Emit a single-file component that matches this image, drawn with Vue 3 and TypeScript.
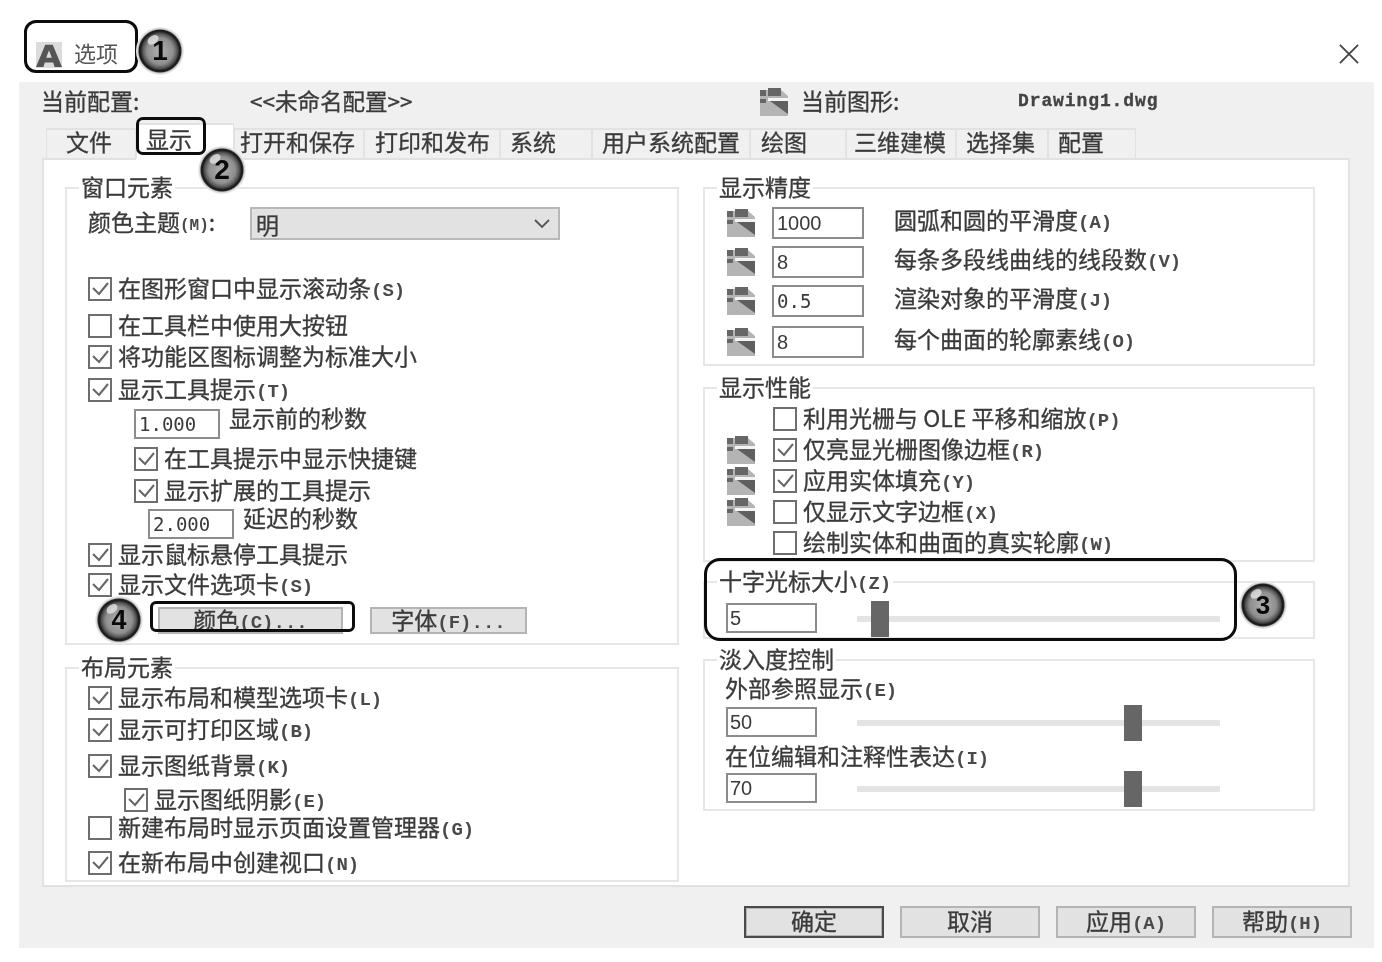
<script setup lang="ts">
interface Row { y: number; x: number; kind: string; text?: string; key?: string; checked?: boolean; value?: string; icon?: boolean; thumb?: number }

function place(list: Row[], top: number) {
  let prev = top
  return list.map((r) => {
    const style = { marginTop: `${r.y - 15 - prev}px`, marginLeft: `${r.x}px` }
    prev = r.y + 15
    return { ...r, style, mono: (r.value ?? '').includes('.') }
  })
}

const tabs = [
  { label: '文件', w: 90, pad: 19 },
  { label: '显示', w: 98, pad: 9, active: true },
  { label: '打开和保存', w: 130, pad: 5 },
  { label: '打印和发布', w: 136, pad: 10 },
  { label: '系统', w: 92, pad: 9 },
  { label: '用户系统配置', w: 158, pad: 9 },
  { label: '绘图', w: 96, pad: 10 },
  { label: '三维建模', w: 110, pad: 7 },
  { label: '选择集', w: 92, pad: 9 },
  { label: '配置', w: 88, pad: 9 },
]

const windowRows = place([
  { kind: 'check', x: 21, y: 289, checked: true, text: '在图形窗口中显示滚动条', key: '(S)' },
  { kind: 'check', x: 21, y: 326, checked: false, text: '在工具栏中使用大按钮' },
  { kind: 'check', x: 21, y: 357, checked: true, text: '将功能区图标调整为标准大小' },
  { kind: 'check', x: 21, y: 390, checked: true, text: '显示工具提示', key: '(T)' },
  { kind: 'input', x: 67, y: 424, value: '1.000', text: '显示前的秒数' },
  { kind: 'check', x: 67, y: 459, checked: true, text: '在工具提示中显示快捷键' },
  { kind: 'check', x: 67, y: 491, checked: true, text: '显示扩展的工具提示' },
  { kind: 'input', x: 81, y: 524, value: '2.000', text: '延迟的秒数' },
  { kind: 'check', x: 21, y: 555, checked: true, text: '显示鼠标悬停工具提示' },
  { kind: 'check', x: 21, y: 585, checked: true, text: '显示文件选项卡', key: '(S)' },
], 240)

const layoutRows = place([
  { kind: 'check', x: 21, y: 698, checked: true, text: '显示布局和模型选项卡', key: '(L)' },
  { kind: 'check', x: 21, y: 730, checked: true, text: '显示可打印区域', key: '(B)' },
  { kind: 'check', x: 21, y: 766, checked: true, text: '显示图纸背景', key: '(K)' },
  { kind: 'check', x: 57, y: 800, checked: true, text: '显示图纸阴影', key: '(E)' },
  { kind: 'check', x: 21, y: 828, checked: false, text: '新建布局时显示页面设置管理器', key: '(G)' },
  { kind: 'check', x: 21, y: 863, checked: true, text: '在新布局中创建视口', key: '(N)' },
], 683)

const precisionRows = place([
  { kind: 'prec', x: 22, y: 223, value: '1000', text: '圆弧和圆的平滑度', key: '(A)' },
  { kind: 'prec', x: 22, y: 262, value: '8', text: '每条多段线曲线的线段数', key: '(V)' },
  { kind: 'prec', x: 22, y: 301, value: '0.5', text: '渲染对象的平滑度', key: '(J)' },
  { kind: 'prec', x: 22, y: 342, value: '8', text: '每个曲面的轮廓素线', key: '(O)' },
], 203)

const perfRows = place([
  { kind: 'check', x: 68, y: 419, checked: false, text: '利用光栅与 OLE 平移和缩放', key: '(P)' },
  { kind: 'check', x: 22, y: 450, checked: true, icon: true, text: '仅亮显光栅图像边框', key: '(R)' },
  { kind: 'check', x: 22, y: 481, checked: true, icon: true, text: '应用实体填充', key: '(Y)' },
  { kind: 'check', x: 22, y: 512, checked: false, icon: true, text: '仅显示文字边框', key: '(X)' },
  { kind: 'check', x: 68, y: 543, checked: false, text: '绘制实体和曲面的真实轮廓', key: '(W)' },
], 403)

const cursorRows = place([
  { kind: 'slider', x: 21, y: 618, value: '5', thumb: 14 },
], 597)

const fadeRows = place([
  { kind: 'label', x: 20, y: 689, text: '外部参照显示', key: '(E)' },
  { kind: 'slider', x: 21, y: 722, value: '50', thumb: 267 },
  { kind: 'label', x: 20, y: 757, text: '在位编辑和注释性表达', key: '(I)' },
  { kind: 'slider', x: 21, y: 788, value: '70', thumb: 267 },
], 675)

const footer = [
  { label: '确定', primary: true },
  { label: '取消' },
  { label: '应用', key: '(A)' },
  { label: '帮助', key: '(H)' },
]

const badges = [
  { n: 1, cls: 'b1' },
  { n: 2, cls: 'b2' },
  { n: 3, cls: 'b3' },
  { n: 4, cls: 'b4' },
]
</script>

<template>
  <div class="root">
    <header class="title">
      <svg class="logo" viewBox="0 0 28 28">
        <rect width="28" height="28" fill="#dcdcdc" />
        <path d="M10 3h8l10 24h-8l-1.500-5h-9L8 27H0z M14 9l-3 8h6z" fill="#555" fill-rule="evenodd" />
      </svg>
      <span class="title-text">选项</span>
      <svg class="close" viewBox="0 0 22 22">
        <path d="M1 1l20 20M21 1L1 21" stroke="#444" stroke-width="2" fill="none" />
      </svg>
    </header>

    <main class="body">
      <div class="head">
        <span class="h-label">当前配置:</span>
        <span class="h-name">&lt;&lt;未命名配置&gt;&gt;</span>
        <svg class="layer" viewBox="0 0 28 28"><use href="#layer-icon" /></svg>
        <span class="h-cur">当前图形:</span>
        <span class="h-file">Drawing1.dwg</span>
      </div>

      <nav class="tabs">
        <div
          v-for="t in tabs"
          :key="t.label"
          class="tab"
          :class="{ active: t.active }"
          :style="{ width: t.w + 'px', paddingLeft: t.pad + 'px' }"
        >{{ t.label }}</div>
      </nav>

      <section class="panel">
        <div class="col">
          <fieldset class="group g-window">
            <legend>窗口元素</legend>
            <div class="theme">
              <span class="theme-label">颜色主题<span class="key small">(M)</span>:</span>
              <div class="select">
                <span>明</span>
                <svg viewBox="0 0 16 10" class="chev"><path d="M1 1l7 7 7-7" stroke="#555" stroke-width="1.800" fill="none" /></svg>
              </div>
            </div>
            <div v-for="r in windowRows" :key="r.y" class="row" :style="r.style">
              <template v-if="r.kind === 'check'">
                <span class="cb">
                  <svg v-if="r.checked" viewBox="0 0 20 20"><path d="M3 9l6 6 9-11" stroke="#666" stroke-width="2" fill="none" /></svg>
                </span>
                <span>{{ r.text }}<span class="key">{{ r.key }}</span></span>
              </template>
              <template v-else>
                <div class="field f-small mono">{{ r.value }}</div>
                <span class="after">{{ r.text }}</span>
              </template>
            </div>
            <div class="btns">
              <button class="btn btn-color">颜色<span class="key">(C)...</span></button>
              <button class="btn btn-font">字体<span class="key">(F)...</span></button>
            </div>
          </fieldset>

          <fieldset class="group g-layout">
            <legend>布局元素</legend>
            <div v-for="r in layoutRows" :key="r.y" class="row" :style="r.style">
              <span class="cb">
                <svg v-if="r.checked" viewBox="0 0 20 20"><path d="M3 9l6 6 9-11" stroke="#666" stroke-width="2" fill="none" /></svg>
              </span>
              <span>{{ r.text }}<span class="key">{{ r.key }}</span></span>
            </div>
          </fieldset>
        </div>

        <div class="col">
          <fieldset class="group g-prec">
            <legend>显示精度</legend>
            <div v-for="r in precisionRows" :key="r.y" class="row" :style="r.style">
              <svg class="layer" viewBox="0 0 28 28"><use href="#layer-icon" /></svg>
              <div class="field f-prec" :class="{ mono: r.mono }">{{ r.value }}</div>
              <span class="prec-text">{{ r.text }}<span class="key">{{ r.key }}</span></span>
            </div>
          </fieldset>

          <fieldset class="group g-perf">
            <legend>显示性能</legend>
            <div v-for="r in perfRows" :key="r.y" class="row" :style="r.style">
              <svg v-if="r.icon" class="layer perf-icon" viewBox="0 0 28 28"><use href="#layer-icon" /></svg>
              <span class="cb">
                <svg v-if="r.checked" viewBox="0 0 20 20"><path d="M3 9l6 6 9-11" stroke="#666" stroke-width="2" fill="none" /></svg>
              </span>
              <span>{{ r.text }}<span class="key">{{ r.key }}</span></span>
            </div>
          </fieldset>

          <fieldset class="group g-cursor">
            <legend>十字光标大小<span class="key">(Z)</span></legend>
            <div v-for="r in cursorRows" :key="r.y" class="row" :style="r.style">
              <div class="field f-slide">{{ r.value }}</div>
              <div class="track"><i class="thumb" :style="{ left: r.thumb + 'px' }"></i></div>
            </div>
          </fieldset>

          <fieldset class="group g-fade">
            <legend>淡入度控制</legend>
            <div v-for="r in fadeRows" :key="r.y" class="row" :style="r.style">
              <span v-if="r.kind === 'label'">{{ r.text }}<span class="key">{{ r.key }}</span></span>
              <template v-else>
                <div class="field f-slide">{{ r.value }}</div>
                <div class="track"><i class="thumb" :style="{ left: r.thumb + 'px' }"></i></div>
              </template>
            </div>
          </fieldset>
        </div>
      </section>

      <footer class="foot">
        <button v-for="f in footer" :key="f.label" class="fbtn" :class="{ primary: f.primary }">
          {{ f.label }}<span class="key">{{ f.key }}</span>
        </button>
      </footer>
    </main>

    <svg class="defs" width="0" height="0">
      <defs>
        <g id="layer-icon">
          <path d="M0 2h21l7 6v20H0z" fill="#b4b4b4" />
          <rect x="0" y="2" width="6" height="6" fill="#666" />
          <rect x="8" y="0" width="13" height="8" fill="#666" />
          <rect x="0" y="11" width="6" height="4" fill="#666" />
          <path d="M8 10h20v3H8z" fill="#f4f4f4" />
          <path d="M10 13h18v13z" fill="#5f5f5f" />
        </g>
      </defs>
    </svg>

    <i class="mark m-title"></i>
    <i class="mark m-tab"></i>
    <i class="mark m-color"></i>
    <i class="mark m-cursor"></i>
    <span v-for="b in badges" :key="b.n" class="badge" :class="b.cls">{{ b.n }}</span>
  </div>
</template>

<style>
html, body { margin: 0; background: #fff; }
</style>

<style scoped>
.root {
  position: relative;
  width: 1382px;
  height: 962px;
  overflow: hidden;
  background: #fff;
  color: #3a3a3a;
  font-family: "Noto Sans CJK SC", "Liberation Sans", sans-serif;
  font-size: 23px;
  line-height: 26px;
  -webkit-text-stroke: 0.3px #3a3a3a;
  filter: blur(0.5px);
}
.title {
  height: 82px;
  display: flex;
  align-items: flex-end;
  padding: 0 22px 14px 36px;
  box-sizing: border-box;
}
.logo { width: 26px; height: 26px; }
.title-text { margin-left: 12px; margin-bottom: 3px; font-size: 22px; line-height: 26px; color: #555; -webkit-text-stroke: 0; }
.close { width: 20px; height: 20px; margin-left: auto; margin-bottom: 4px; margin-right: 1px; }
.body {
  margin-left: 19px;
  width: 1355px;
  height: 866px;
  background: #f0f0f0;
  padding-left: 23px;
  box-sizing: border-box;
}
.head {
  height: 41px;
  display: flex;
  align-items: center;
}
.h-label { width: 208px; margin-left: -1px; margin-top: -5px; }
.h-name { width: 510px; font-size: 22.5px; margin-left: 1px; margin-top: -5px; }
.h-cur { width: 216px; margin-left: 13px; margin-top: -5px; }
.h-file { margin-left: 1px; font-family: "Liberation Mono", monospace; font-weight: 700; font-size: 18px; letter-spacing: 0.9px; color: #444; margin-top: -4px; }
.head .layer { margin-top: -1px; }
.layer { width: 28px; height: 28px; flex: none; }
.tabs {
  height: 37px;
  display: flex;
  align-items: flex-end;
  margin-left: 4px;
  margin-bottom: -2px;
  position: relative;
  z-index: 1;
}
.tab {
  height: 32px;
  box-sizing: border-box;
  border: 2px solid #e2e2e2;
  border-left-width: 1px;
  border-right-width: 1px;
  background: #f0f0f0;
  line-height: 22px;
  white-space: nowrap;
}
.tab.active {
  height: 37px;
  background: #fff;
  border-bottom-color: #fff;
  line-height: 26px;
}
.panel {
  width: 1308px;
  height: 729px;
  box-sizing: border-box;
  background: #fff;
  border: 2px solid #e2e2e2;
  padding: 13px 0 0 21px;
  display: flex;
  gap: 24px;
}
.col { display: flex; flex-direction: column; }
.col:first-child { width: 614px; }
.col:last-child { width: 612px; }
.group {
  margin: 0;
  padding: 0;
  min-width: 0;
  box-sizing: border-box;
  border: 2px solid #e6e6e6;
}
.group legend {
  margin-left: 12px;
  padding: 0 2px;
  height: 30px;
  line-height: 26px;
}
.g-window { height: 472px; }
.g-layout { height: 229px; margin-top: 8px; }
.g-prec { height: 193px; }
.g-perf { height: 189px; margin-top: 7px; }
.g-cursor { height: 72px; margin-top: 5px; }
.g-fade { height: 166px; margin-top: 6px; }
.row {
  height: 30px;
  display: flex;
  align-items: center;
  white-space: nowrap;
}
.key { font-family: "Liberation Mono", monospace; font-size: 19px; font-weight: 700; color: #4a4a4a; -webkit-text-stroke: 0; vertical-align: 1.500px; }
.key.small { font-size: 16px; }
.cb {
  width: 24px;
  height: 24px;
  flex: none;
  box-sizing: border-box;
  border: 2px solid #6e6e6e;
  background: #fff;
  margin-right: 6px;
  display: flex;
}
.cb svg { width: 20px; height: 20px; }
.theme {
  height: 33px;
  display: flex;
  align-items: center;
  margin: 4px 0 0 21px;
}
.theme-label { width: 162px; white-space: nowrap; }
.select {
  width: 310px;
  height: 33px;
  box-sizing: border-box;
  border: 2px solid #b8b8b8;
  background: #e2e2e2;
  display: flex;
  align-items: center;
  justify-content: space-between;
  padding: 0 8px 0 4px;
}
.chev { width: 16px; height: 10px; }
.field {
  box-sizing: border-box;
  border: 2px solid #8c8c8c;
  background: #fff;
  font-family: "Liberation Sans", sans-serif;
  font-size: 20px;
  flex: none;
  padding-left: 3px;
  -webkit-text-stroke: 0;
}
.field.mono { font-family: "DejaVu Sans Mono", monospace; font-size: 19px; }
.f-small { width: 86px; height: 30px; line-height: 27px; }
.after { margin-left: 9px; margin-top: -15px; }
.f-prec { width: 92px; height: 32px; line-height: 28px; margin-left: 17px; }
.prec-text { margin-left: 30px; margin-top: -4px; }
.perf-icon { margin-right: 18px; }
.f-slide { width: 91px; height: 30px; line-height: 27px; padding-left: 2px; }
.track {
  position: relative;
  width: 363px;
  height: 6px;
  margin-left: 40px;
  margin-top: 2px;
  background: #e4e4e4;
}
.thumb {
  position: absolute;
  top: -15px;
  width: 18px;
  height: 36px;
  background: #666;
}
.btns { display: flex; gap: 27px; margin: 7px 0 0 91px; }
.btn {
  height: 27px;
  padding: 0;
  box-sizing: border-box;
  border: 2px solid #b4b4b4;
  background: #e2e2e2;
  color: #3a3a3a;
  font-family: inherit;
  font-size: 23px;
  line-height: 18px;
}
.btn-color { width: 185px; }
.btn-font { width: 157px; }
.foot {
  display: flex;
  gap: 16px;
  margin: 19px 0 0 702px;
}
.fbtn {
  width: 140px;
  height: 32px;
  padding: 0 0 2px;
  box-sizing: border-box;
  border: 2px solid #b4b4b4;
  background: #e2e2e2;
  color: #3a3a3a;
  font-family: inherit;
  font-size: 23px;
  line-height: 24px;
}
.fbtn.primary { border-color: #4a4a4a; box-shadow: inset 0 0 0 1px #b4b4b4; }
.defs { position: absolute; }
.mark {
  position: absolute;
  box-sizing: border-box;
  border: 3px solid #0c0c0c;
  z-index: 3;
}
.m-title { left: 24px; top: 20px; width: 114px; height: 53px; border-radius: 12px; }
.m-tab { left: 136px; top: 117px; width: 70px; height: 38px; border-radius: 7px; }
.m-color { left: 150px; top: 601px; width: 205px; height: 31px; border-radius: 6px; }
.m-cursor { left: 704px; top: 558px; width: 533px; height: 83px; border-radius: 16px; }
.badge {
  position: absolute;
  z-index: 4;
  box-sizing: border-box;
  border-radius: 50%;
  display: flex;
  align-items: center;
  justify-content: center;
  color: #0a0a0a;
  font-family: "Liberation Sans", sans-serif;
  font-weight: 700;
  -webkit-text-stroke: 0;
  background: radial-gradient(circle closest-side at 50% 50%, #b0b0b0 0%, #8f8f8f 55%, #555 72%, #1a1a1a 82%, #222 87%, #d0d0d0 92%, #f2f2f2 100%);
}
.badge::before {
  content: "";
  position: absolute;
  left: 22%;
  top: 18%;
  width: 24%;
  height: 16%;
  border-radius: 50%;
  background: #e4e4e4;
  transform: rotate(-35deg);
  opacity: 0.8;
}
.b1 { left: 136px; top: 27px; width: 48px; height: 48px; font-size: 28px; }
.b2 { left: 198px; top: 146px; width: 48px; height: 48px; font-size: 28px; }
.b3 { left: 1239px; top: 581px; width: 48px; height: 48px; font-size: 26px; }
.b4 { left: 95px; top: 596px; width: 48px; height: 48px; font-size: 27px; }
</style>
